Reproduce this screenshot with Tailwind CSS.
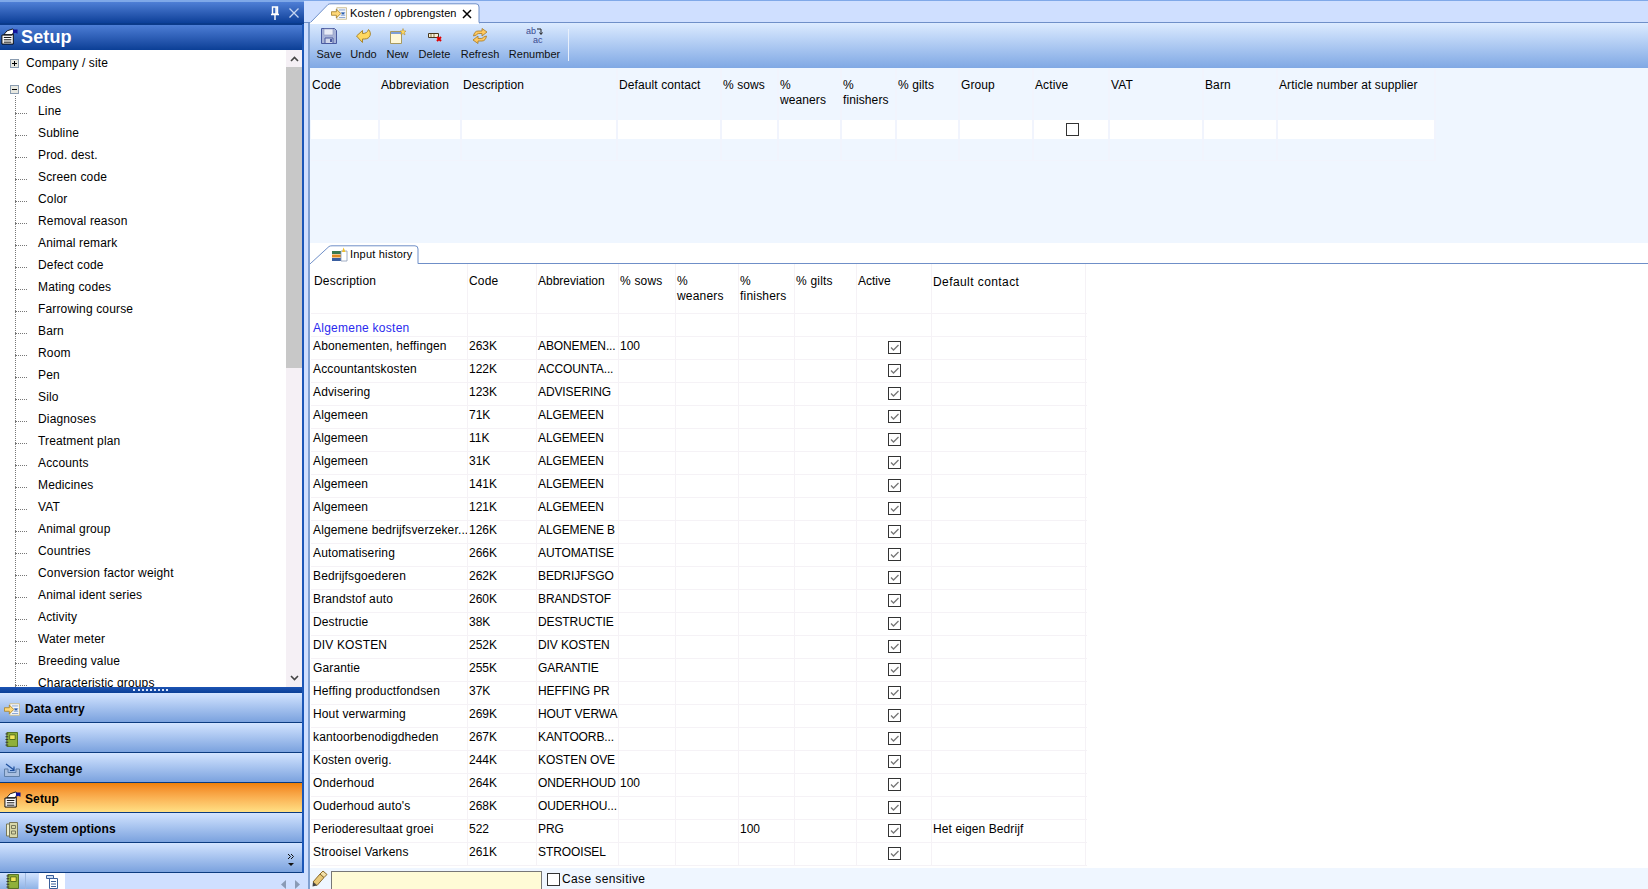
<!DOCTYPE html>
<html>
<head>
<meta charset="utf-8">
<script src="https://cdn.jsdelivr.net/npm/@tailwindcss/browser@4"></script>
</head>
<body class="m-0">
<svg width="0" height="0" class="absolute">
  <defs>
    <symbol id="setup" viewBox="0 0 18 18">
      <path d="M1 7.500h10.500l1.500-1v10.500h-12z" fill="#fff" stroke="#000"/>
      <path d="M3 10h8M3 12.500h8M3 15h8" stroke="#000"/>
      <path d="M3 7l3.500-4 6-2 1.500 2-2 4z" fill="#fff" stroke="#000" stroke-width=".9"/>
      <path d="M12.500 1.500h5v4.500l-2.500-1-2 1z" fill="#12129a"/>
    </symbol>
    <symbol id="arrowdoc" viewBox="0 0 18 14">
      <path d="M6.500 .5h11v13h-11z" fill="#f4f6fb" stroke="#c9b98a"/>
      <path d="M9 3h7M11 6h5M11 9h5M9 11.500h7" stroke="#7f9fd0"/>
      <path d="M.5 5h5.500v-3l5 5-5 5v-3h-5.500z" fill="#ffd878" stroke="#a88530"/>
      <path d="M12 6h3v2h-3z" fill="#2b5fb0"/>
    </symbol>
    <symbol id="book" viewBox="0 0 14 16">
      <path d="M2 .5h11.500v15h-11.500z" fill="#8fb03a" stroke="#4f6b1a"/>
      <path d="M5 3h6v5h-6z" fill="#f3e45a" stroke="#4f6b1a"/>
      <path d="M.5 2h3M.5 5h3M.5 8h3M.5 11h3M.5 14h3" stroke="#333"/>
    </symbol>
  </defs>
</svg>

<div class="w-[1648px] h-[889px] flex overflow-hidden bg-[#cfdfff] text-[12px] leading-[15px] text-black font-['Liberation_Sans',Arial,sans-serif]">

  <!-- LEFT PANEL -->
  <aside class="w-[304px] h-full flex flex-col shrink-0">
    <div class="h-[2px] bg-[#7fa8e8]"></div>
    <div class="h-[22px] flex items-center justify-end gap-[8px] pr-[4px] border-b border-[#0a3a8a] bg-gradient-to-b from-[#4f7fd6] to-[#0b3f98]">
      <svg width="10" height="14" viewBox="0 0 10 14"><path d="M2.500 1h5v7h-5zM1 8.500h8M5 9v5M6 1.500v6" stroke="#fff" stroke-width="1.400" fill="none"/></svg>
      <svg width="12" height="12" viewBox="0 0 12 12"><path d="M1.500 1.500l9 9M10.500 1.500l-9 9" stroke="#c6d6f2" stroke-width="1.300"/></svg>
    </div>
    <div class="flex-1 flex flex-col w-[304px] border-r-2 border-[#1a56b8] min-h-0">
      <div class="h-[26px] flex items-center gap-[3px] pl-[1px] pb-[2px] bg-gradient-to-b from-[#4d7ed6] to-[#0a3f96] text-[18px] leading-[22px] font-bold text-white shrink-0 border-t border-[#0a3a8a] tracking-[0.15px]">
        <svg width="17" height="17"><use href="#setup"/></svg>
        <span>Setup</span>
      </div>
      <div class="flex h-[637px] bg-white shrink-0">
        <div id="tree" class="relative flex-1 overflow-hidden pt-[2px] tracking-[0.15px]">
          <div class="absolute left-[15px] top-[46px] bottom-0 border-l border-dotted border-[#777]"></div>
          <div class="h-[22px] flex items-center pl-[10px] gap-[7px]">
            <svg width="9" height="9" viewBox="0 0 9 9"><rect x=".5" y=".5" width="8" height="8" fill="#e8e8e0" stroke="#8a9cb0"/><path d="M2 4.500h5M4.500 2v5" stroke="#000"/></svg>
            <span>Company / site</span>
          </div>
          <div class="h-[22px] mt-[4px] flex items-center pl-[10px] gap-[7px]">
            <svg width="9" height="9" viewBox="0 0 9 9"><rect x=".5" y=".5" width="8" height="8" fill="#e8e8e0" stroke="#8a9cb0"/><path d="M2 4.500h5" stroke="#000"/></svg>
            <span>Codes</span>
          </div>
        </div>
        <div class="w-[16px] flex flex-col bg-[#f5f0f5] shrink-0">
          <div class="h-[17px] flex items-center justify-center"><svg width="9" height="6" viewBox="0 0 9 6"><path d="M1 5l3.500-3.500 3.500 3.500" stroke="#444" stroke-width="1.600" fill="none"/></svg></div>
          <div class="h-[301px] bg-[#c8c8c8]"></div>
          <div class="flex-1 flex items-end justify-center pb-[6px]"><svg width="9" height="6" viewBox="0 0 9 6"><path d="M1 1l3.500 3.500 3.500-3.500" stroke="#444" stroke-width="1.600" fill="none"/></svg></div>
        </div>
      </div>
      <div class="h-[6px] shrink-0 flex justify-center items-center pr-[2px] bg-gradient-to-b from-[#1c54b4] to-[#0a3f96]">
        <div class="w-[35px] h-[2px] border-t-2 border-dotted border-[#dbe6fa]"></div>
      </div>
      <div class="h-[30px] shrink-0 flex items-center pt-[4px] pl-[4px] gap-[5px] font-bold bg-gradient-to-b from-[#d3e4ff] to-[#7ba2de] border-b border-[#0a3a80] tracking-[0.1px]">
        <svg width="16" height="13"><use href="#arrowdoc"/></svg><span>Data entry</span>
      </div>
      <div class="h-[30px] shrink-0 flex items-center pt-[4px] pl-[5px] gap-[7px] font-bold bg-gradient-to-b from-[#d3e4ff] to-[#7ba2de] border-b border-[#0a3a80] tracking-[0.1px]">
        <svg width="13" height="15"><use href="#book"/></svg><span>Reports</span>
      </div>
      <div class="h-[30px] shrink-0 flex items-center pt-[4px] pl-[4px] gap-[5px] font-bold bg-gradient-to-b from-[#d3e4ff] to-[#7ba2de] border-b border-[#0a3a80] tracking-[0.1px]">
        <svg width="16" height="14" viewBox="0 0 16 14"><path d="M.5 6v7.500h15v-7.500h-3.500v3.500h-8v-3.500z" fill="#a9bfe0" stroke="#5f7fa8"/><path d="M2 1l8 6M10 3.500v4h-4" stroke="#1f4f9c" stroke-width="1.200" fill="none"/></svg><span>Exchange</span>
      </div>
      <div class="h-[30px] shrink-0 flex items-center pt-[4px] pl-[4px] gap-[4px] font-bold bg-gradient-to-b from-[#f08000] to-[#ffe084] border-b border-[#0a3a80] tracking-[0.1px]">
        <svg width="17" height="17"><use href="#setup"/></svg><span>Setup</span>
      </div>
      <div class="h-[30px] shrink-0 flex items-center pt-[4px] pl-[6px] gap-[7px] font-bold bg-gradient-to-b from-[#d3e4ff] to-[#7ba2de] border-b border-[#0a3a80] tracking-[0.1px]">
        <svg width="12" height="16" viewBox="0 0 12 16"><path d="M3.500 .5h8v15h-8z" fill="#d8d8a8" stroke="#77775a"/><path d="M.5 2h3v12h-3z" fill="#eeeecc" stroke="#77775a"/><path d="M5.500 3.500h4v3h-4zM5.500 9h4v3h-4z" fill="none" stroke="#77775a"/></svg><span>System options</span>
      </div>
      <div class="h-[30px] shrink-0 flex flex-col items-end justify-center pt-[4px] pr-[7px] bg-gradient-to-b from-[#d3e4ff] to-[#7ba2de] border-b border-[#0a3a80]">
        <svg width="8" height="14" viewBox="0 0 8 14"><path d="M1 1l2.500 2.500-2.500 2.500M4 1l2.500 2.500-2.500 2.500" stroke="#111" fill="none"/><path d="M1 10h6l-3 3z" fill="#111"/></svg>
      </div>
    </div>
    <div class="h-[16px] shrink-0 flex relative overflow-hidden">
      <div class="w-[26px] flex items-start justify-center pt-[1px] bg-gradient-to-b from-[#d3e4ff] to-[#8fb3e6] border-r border-[#9db8e0]"><svg width="13" height="15"><use href="#book"/></svg></div>
      <div class="w-[12px] bg-gradient-to-b from-[#d3e4ff] to-[#8fb3e6]"></div>
      <div class="w-[26px] ml-[1px] bg-white flex items-start justify-center pt-[2px]"><svg width="12" height="14" viewBox="0 0 12 14"><path d="M3.500 3.500h8v10h-8z" fill="#fff" stroke="#3a5f9a"/><path d="M.5 .5h7v3h-7z" fill="#cfe0f5" stroke="#3a5f9a"/><path d="M5 6.500h5M5 9h5M5 11.500h5" stroke="#3a5f9a"/></svg></div>
      <div class="ml-auto flex items-end gap-[7px] pr-[4px]">
        <svg width="6" height="9" viewBox="0 0 6 9"><path d="M5 0v9l-5-4.500z" fill="#8a9ab5"/></svg>
        <svg width="6" height="9" viewBox="0 0 6 9"><path d="M1 0v9l5-4.500z" fill="#8a9ab5"/></svg>
      </div>
    </div>
  </aside>

  <!-- RIGHT AREA -->
  <main class="flex-1 flex flex-col h-full min-w-0">
    <!-- tab strip -->
    <div class="h-[23px] shrink-0 relative border-t border-[#7fa8e8] border-b border-b-[#6f8fc8] bg-[#cfdfff]">
      <svg class="absolute left-[5px] top-[2px]" width="176" height="21" viewBox="0 0 176 21"><path d="M.5 20.500L19 1.500Q20 .8 22 .8H167Q170 .8 170 4V20.500" fill="#fff" stroke="#6f8fc8"/><path d="M1 20.500H170" stroke="#fff" stroke-width="2"/></svg>
      <div class="absolute left-[27px] top-[3px] h-[18px] flex items-center gap-[3px] text-[11px] tracking-[0.1px]">
        <svg width="16" height="13"><use href="#arrowdoc"/></svg><span>Kosten / opbrengsten</span>
      </div>
      <svg class="absolute left-[158px] top-[8px]" width="10" height="10" viewBox="0 0 10 10"><path d="M1 1l8 8M9 1l-8 8" stroke="#000" stroke-width="1.500"/></svg>
    </div>

    <div class="flex-1 min-h-0 flex flex-col ml-[4px] border-l-2 border-[#7f9fd0]">
      <!-- toolbar -->
      <div class="h-[45px] shrink-0 flex items-start pl-[7px] gap-[11px] bg-gradient-to-b from-[#dcebff] to-[#80a8e4] text-[11px] leading-[14px] text-[#111]">
        <div class="w-[24px] flex flex-col items-center pt-[5px]">
          <svg width="16" height="16" viewBox="0 0 16 16"><path d="M.5 .5h13l2 2v13h-15z" fill="#a9b4d8" stroke="#4a5aa0"/><path d="M3 1h9v6h-9z" fill="#e8ebf6" stroke="#8a96c0" stroke-width=".6"/><path d="M4 10h8v5.500h-8z" fill="#d0d6ea" stroke="#4a5aa0"/><path d="M9 11h2v3h-2z" fill="#4a5aa0"/></svg>
          <span class="mt-[3px]">Save</span>
        </div>
        <div class="w-[25px] -ml-[1px] flex flex-col items-center pt-[5px]">
          <svg width="16" height="16" viewBox="0 0 16 16"><path d="M.5 8L6.500 2.500V5.500C9.500 5.500 11.500 4.500 12.500 1.500C16 5 14.500 11 8.500 11H6.500V14.500z" fill="#ffd860" stroke="#a88530"/></svg>
          <span class="mt-[3px]">Undo</span>
        </div>
        <div class="w-[21px] flex flex-col items-center pt-[5px]">
          <svg width="16" height="16" viewBox="0 0 16 16"><path d="M.5 3.500h11v12h-11z" fill="#fff8d8" stroke="#a89a60"/><path d="M1 4h10v2h-10z" fill="#7f9fd8"/><path d="M13 .5l1 2.500 2 0-1.500 1.500.5 2.500-2-1.500-2 1.500.5-2.500-1.500-1.500 2 0z" fill="#ffd860" stroke="#a88530" stroke-width=".5"/></svg>
          <span class="mt-[3px]">New</span>
        </div>
        <div class="w-[31px] flex flex-col items-center pt-[5px]">
          <svg width="16" height="16" viewBox="0 0 16 16"><path d="M1.500 5.500h10v4h-10z" fill="#f5efd8" stroke="#4a3a20"/><path d="M4 6v3M7 6v3" stroke="#8a7a50"/><path d="M10 9l4 4M14 9l-4 4" stroke="#e00000" stroke-width="2"/></svg>
          <span class="mt-[3px]">Delete</span>
        </div>
        <div class="w-[38px] flex flex-col items-center pt-[5px]">
          <svg width="16" height="16" viewBox="0 0 16 16"><path d="M10 .5v2.500H6C3.500 3 2 5 1.500 8L4.500 7C5 6 6 5.500 7 5.500H10V8L15 4z" fill="#ffc860" stroke="#a87a20" stroke-width=".8"/><path d="M6 15.500V13H10C12.500 13 14 11 14.500 8L11.500 9C11 10 10 10.500 9 10.500H6V8L1 12z" fill="#ffc860" stroke="#a87a20" stroke-width=".8"/></svg>
          <span class="mt-[3px]">Refresh</span>
        </div>
        <div class="w-[49px] flex flex-col items-center pt-[3px]">
          <svg width="18" height="18" viewBox="0 0 18 18"><text x="0" y="8" font-size="9" font-family="Liberation Sans" fill="#3a4a90">ab</text><text x="7" y="17" font-size="9" font-family="Liberation Sans" fill="#3a4a90">ac</text><path d="M11 3h4v5M13.500 6.500l1.500 2 1.500-2" stroke="#222" fill="none"/></svg>
          <span class="mt-[3px]">Renumber</span>
        </div>
        <div class="w-[1px] h-[32px] mt-[6px] -ml-[2px] bg-[#e8f0fc]"></div>
      </div>

      <!-- top grid -->
      <div class="h-[175px] shrink-0 bg-[#eff6ff] pl-[1px] tracking-[0.1px]">
        <div class="w-[1125px]">
          <div class="h-[52px] grid grid-cols-[69px_82px_156px_104px_57px_63px_55px_63px_74px_76px_94px_74px_158px]">
            <div class="pl-[1px] pt-[10px] border-r-2 border-[#f1f4fd]">Code</div>
            <div class="pl-[1px] pt-[10px] border-r-2 border-[#f1f4fd]">Abbreviation</div>
            <div class="pl-[1px] pt-[10px] border-r-2 border-[#f1f4fd]">Description</div>
            <div class="pl-[1px] pt-[10px] border-r-2 border-[#f1f4fd]">Default contact</div>
            <div class="pl-[1px] pt-[10px] border-r-2 border-[#f1f4fd]">% sows</div>
            <div class="pl-[1px] pt-[10px] border-r-2 border-[#f1f4fd]">%<br>weaners</div>
            <div class="pl-[1px] pt-[10px] border-r-2 border-[#f1f4fd]">%<br>finishers</div>
            <div class="pl-[1px] pt-[10px] border-r-2 border-[#f1f4fd]">% gilts</div>
            <div class="pl-[1px] pt-[10px] border-r-2 border-[#f1f4fd]">Group</div>
            <div class="pl-[1px] pt-[10px] border-r-2 border-[#f1f4fd]">Active</div>
            <div class="pl-[1px] pt-[10px] border-r-2 border-[#f1f4fd]">VAT</div>
            <div class="pl-[1px] pt-[10px] border-r-2 border-[#f1f4fd]">Barn</div>
            <div class="pl-[1px] pt-[10px] border-r-2 border-[#f1f4fd]">Article number at supplier</div>
          </div>
          <div class="h-[19px] grid grid-cols-[69px_82px_156px_104px_57px_63px_55px_63px_74px_76px_94px_74px_158px]">
            <div class="bg-white border-r-2 border-[#f1f4fd]"></div>
            <div class="bg-white border-r-2 border-[#f1f4fd]"></div>
            <div class="bg-white border-r-2 border-[#f1f4fd]"></div>
            <div class="bg-white border-r-2 border-[#f1f4fd]"></div>
            <div class="bg-white border-r-2 border-[#f1f4fd]"></div>
            <div class="bg-white border-r-2 border-[#f1f4fd]"></div>
            <div class="bg-white border-r-2 border-[#f1f4fd]"></div>
            <div class="bg-white border-r-2 border-[#f1f4fd]"></div>
            <div class="bg-white border-r-2 border-[#f1f4fd]"></div>
            <div class="bg-white border-r-2 border-[#f1f4fd] flex justify-center pl-[3px] pt-[3px]"><div class="w-[13px] h-[13px] border border-[#333] bg-white"></div></div>
            <div class="bg-white border-r-2 border-[#f1f4fd]"></div>
            <div class="bg-white border-r-2 border-[#f1f4fd]"></div>
            <div class="bg-white border-r-2 border-[#f1f4fd]"></div>
          </div>
          <div class="h-[22px] grid grid-cols-[69px_82px_156px_104px_57px_63px_55px_63px_74px_76px_94px_74px_158px] border-b border-[#f1f4fd]">
            <div class="border-r-2 border-[#f1f4fd]"></div>
            <div class="border-r-2 border-[#f1f4fd]"></div>
            <div class="border-r-2 border-[#f1f4fd]"></div>
            <div class="border-r-2 border-[#f1f4fd]"></div>
            <div class="border-r-2 border-[#f1f4fd]"></div>
            <div class="border-r-2 border-[#f1f4fd]"></div>
            <div class="border-r-2 border-[#f1f4fd]"></div>
            <div class="border-r-2 border-[#f1f4fd]"></div>
            <div class="border-r-2 border-[#f1f4fd]"></div>
            <div class="border-r-2 border-[#f1f4fd]"></div>
            <div class="border-r-2 border-[#f1f4fd]"></div>
            <div class="border-r-2 border-[#f1f4fd]"></div>
            <div class="border-r-2 border-[#f1f4fd]"></div>
          </div>
        </div>
      </div>

      <!-- input history tab -->
      <div class="h-[21px] shrink-0 relative bg-white border-b border-[#6f8fc8]">
        <svg class="absolute left-0 top-[2px]" width="110" height="19" viewBox="0 0 110 19"><path d="M.5 18.500L19 1.500Q20 .8 22 .8H105Q108 .8 108 4V18.500" fill="#fff" stroke="#6f8fc8"/><path d="M1 19H107.500" stroke="#fff" stroke-width="2"/></svg>
        <div class="absolute left-[22px] top-[3px] h-[16px] flex items-center gap-[2px] text-[11px] tracking-[0.2px]">
          <svg width="16" height="15" viewBox="0 0 16 15"><path d="M0 4h10v3h-10z" fill="#3a7a50"/><path d="M0 7.500h10v3h-10z" fill="#e08a20"/><path d="M0 11h10v3h-10z" fill="#3a5fa0"/><path d="M9 4h6v10h-6z" fill="#fff" stroke="#8a9ab5" stroke-width=".8"/><path d="M11.500 .5l2 4.500h-3.500z" fill="#f0c030"/></svg>
          <span>Input history</span>
        </div>
      </div>

      <!-- lower grid -->
      <div class="flex-1 min-h-0 bg-white pl-[1px] overflow-hidden">
        <div class="w-[776px]">
          <div class="h-[50px] grid grid-cols-[157px_69px_82px_57px_63px_56px_62px_75px_154px] border-b border-[#f5f2f6] tracking-[0.2px]">
            <div class="pl-[3px] pt-[10px] border-r border-[#f5f2f6]">Description</div>
            <div class="pl-[1px] pt-[10px] border-r border-[#f5f2f6]">Code</div>
            <div class="pl-[1px] pt-[10px] border-r border-[#f5f2f6] tracking-normal">Abbreviation</div>
            <div class="pl-[1px] pt-[10px] border-r border-[#f5f2f6]">% sows</div>
            <div class="pl-[1px] pt-[10px] border-r border-[#f5f2f6]">%<br>weaners</div>
            <div class="pl-[1px] pt-[10px] border-r border-[#f5f2f6]">%<br>finishers</div>
            <div class="pl-[1px] pt-[10px] border-r border-[#f5f2f6]">% gilts</div>
            <div class="pl-[1px] pt-[10px] border-r border-[#f5f2f6] tracking-normal">Active</div>
            <div class="pl-[1px] pt-[11px] border-r border-[#f5f2f6] tracking-[0.42px]">Default contact</div>
          </div>
          <div class="h-[23px] grid grid-cols-[157px_69px_82px_57px_63px_56px_62px_75px_154px] border-b border-[#f5f2f6]">
            <div class="pl-[2px] pt-[7px] border-r border-[#f5f2f6] text-[#2a2aee] tracking-[0.25px]">Algemene kosten</div>
            <div class="border-r border-[#f5f2f6]"></div>
            <div class="border-r border-[#f5f2f6]"></div>
            <div class="border-r border-[#f5f2f6]"></div>
            <div class="border-r border-[#f5f2f6]"></div>
            <div class="border-r border-[#f5f2f6]"></div>
            <div class="border-r border-[#f5f2f6]"></div>
            <div class="border-r border-[#f5f2f6]"></div>
            <div class="border-r border-[#f5f2f6]"></div>
          </div>
          <div id="rows"></div>
        </div>
      </div>

      <!-- footer -->
      <div class="h-[21px] shrink-0 bg-[#eff6ff] flex items-start pl-[2px] overflow-hidden">
        <svg class="mt-[2px]" width="17" height="17" viewBox="0 0 17 17"><path d="M1 12l7-8 4 3.500-7 8z" fill="#e8c878" stroke="#8a6a2a"/><path d="M8 4l3-3 4 3.500-3 3z" fill="#f2e0a8" stroke="#8a6a2a"/><path d="M1 12l-.5 4.500 4.500-1z" fill="#444"/></svg>
        <div class="w-[211px] h-[21px] ml-[2px] mt-[3px] bg-[#fffbd6] border-t border-x border-[#777]"></div>
        <div class="w-[13px] h-[13px] ml-[5px] mt-[5px] border border-[#333] bg-white shrink-0"></div>
        <span class="ml-[2px] mt-[4px] tracking-[0.38px]">Case sensitive</span>
      </div>
    </div>
  </main>
</div>

<script>
const treeItems = ["Line","Subline","Prod. dest.","Screen code","Color","Removal reason","Animal remark","Defect code","Mating codes","Farrowing course","Barn","Room","Pen","Silo","Diagnoses","Treatment plan","Accounts","Medicines","VAT","Animal group","Countries","Conversion factor weight","Animal ident series","Activity","Water meter","Breeding value","Characteristic groups"];
const tree = document.getElementById('tree');
treeItems.forEach(t => {
  const r = document.createElement('div');
  r.className = 'relative h-[22px] flex items-center pl-[38px] whitespace-nowrap';
  r.innerHTML = '<span class="absolute left-[15px] top-[13px] w-[12px] border-t border-dotted border-[#777]"></span><span>' + t + '</span>';
  tree.appendChild(r);
});
const data = [
["Abonementen, heffingen","263K","ABONEMEN...","100","","",""],
["Accountantskosten","122K","ACCOUNTA...","","","",""],
["Advisering","123K","ADVISERING","","","",""],
["Algemeen","71K","ALGEMEEN","","","",""],
["Algemeen","11K","ALGEMEEN","","","",""],
["Algemeen","31K","ALGEMEEN","","","",""],
["Algemeen","141K","ALGEMEEN","","","",""],
["Algemeen","121K","ALGEMEEN","","","",""],
["<span class=\"tracking-[0.06px]\">Algemene bedrijfsverzeker...</span>","126K","ALGEMENE B","","","",""],
["Automatisering","266K","AUTOMATISE","","","",""],
["Bedrijfsgoederen","262K","BEDRIJFSGO","","","",""],
["Brandstof auto","260K","BRANDSTOF","","","",""],
["Destructie","38K","DESTRUCTIE","","","",""],
["DIV KOSTEN","252K","DIV KOSTEN","","","",""],
["Garantie","255K","GARANTIE","","","",""],
["Heffing productfondsen","37K","HEFFING PR","","","",""],
["Hout verwarming","269K","HOUT VERWA","","","",""],
["kantoorbenodigdheden","267K","KANTOORB...","","","",""],
["Kosten overig.","244K","KOSTEN OVE","","","",""],
["Onderhoud","264K","ONDERHOUD","100","","",""],
["Ouderhoud auto's","268K","OUDERHOU...","","","",""],
["Perioderesultaat groei","522","PRG","","100","","Het eigen Bedrijf"],
["Strooisel Varkens","261K","STROOISEL","","","",""]
];
const cellA = 'pl-[2px] pt-[2px] border-r border-[#f5f2f6] whitespace-nowrap overflow-hidden tracking-[0.14px]';
const cellB = 'pl-[1px] pt-[2px] border-r border-[#f5f2f6] whitespace-nowrap overflow-hidden';
const cellC = 'pl-[1px] pt-[2px] border-r border-[#f5f2f6] whitespace-nowrap overflow-hidden tracking-[-0.1px]';
const check = '<div class="border-r border-[#f5f2f6] flex justify-center pt-[4px]"><svg width="13" height="13" viewBox="0 0 13 13"><rect x=".5" y=".5" width="12" height="12" fill="#fff" stroke="#333"/><path d="M3 6.500l2.500 2.500 5-5" stroke="#777" stroke-width="1.300" fill="none"/></svg></div>';
document.getElementById('rows').innerHTML = data.map(d =>
  '<div class="h-[23px] grid grid-cols-[157px_69px_82px_57px_63px_56px_62px_75px_154px] border-b border-[#f5f2f6]">' +
  '<div class="' + cellA + '">' + d[0] + '</div>' +
  '<div class="' + cellB + '">' + d[1] + '</div>' +
  '<div class="' + cellC + '">' + d[2] + '</div>' +
  '<div class="' + cellB + '">' + d[3] + '</div>' +
  '<div class="' + cellB + '"></div>' +
  '<div class="' + cellB + '">' + d[4] + '</div>' +
  '<div class="' + cellB + '"></div>' + check +
  '<div class="' + cellB + ' tracking-[0.1px]">' + d[6] + '</div></div>'
).join('');
</script>
</body>
</html>
